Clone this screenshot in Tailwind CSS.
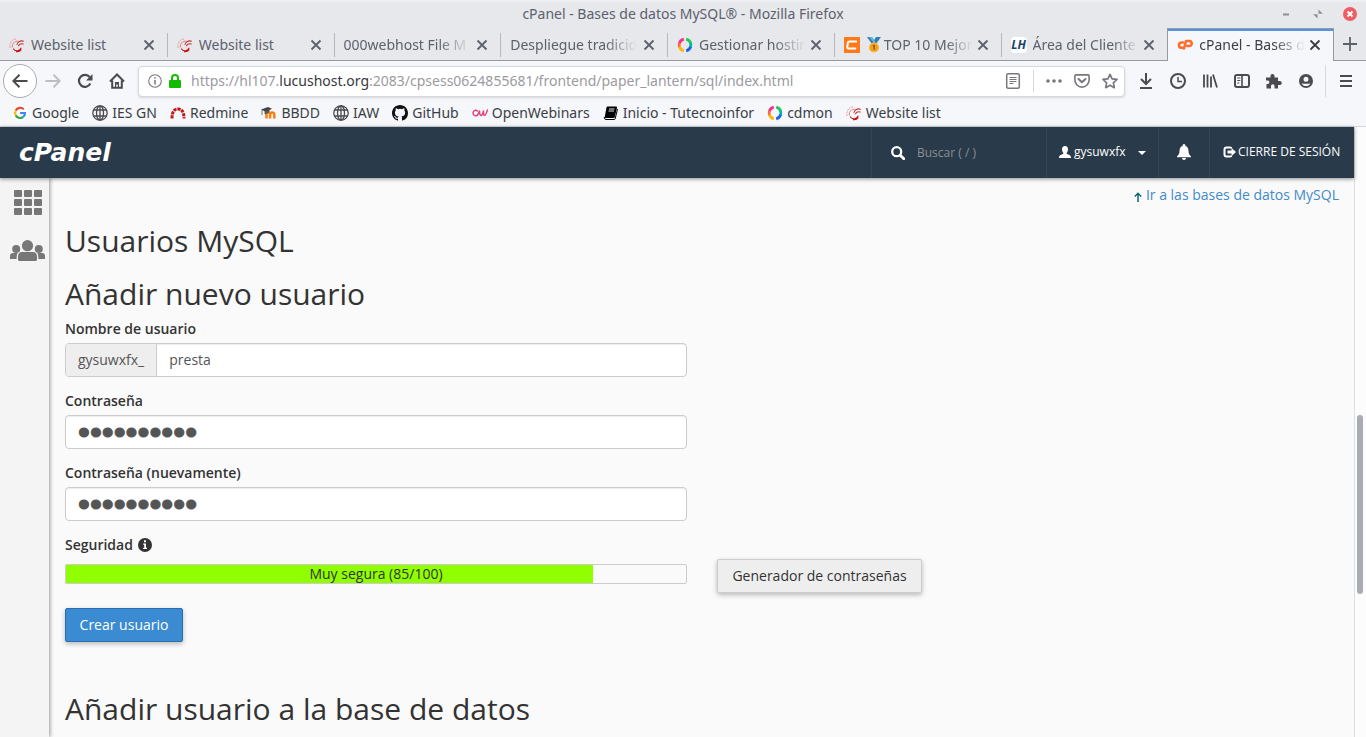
<!DOCTYPE html>
<html lang="es">
<head>
<meta charset="utf-8">
<title>cPanel - Bases de datos MySQL®</title>
<script src="https://cdn.jsdelivr.net/npm/@tailwindcss/browser@4"></script>
</head>
<body class="flex h-screen flex-col overflow-hidden bg-[#fafafa] font-['Open_Sans',sans-serif] text-sm text-[#333]">

<svg class="hidden" aria-hidden="true">
  <symbol id="swirl" viewBox="0 0 16 16"><g fill="none" stroke-linecap="round"><path d="M1 10.500C.2 6 3 2 8 1.800" stroke="#e39a9a" stroke-width="1" stroke-dasharray="1 1.600"/><path d="M3.300 10C3 6.500 5.500 4 9 4.200" stroke="#d86a6a" stroke-width=".9" stroke-dasharray="2 1"/><path d="M8 7.500C8.500 4.500 11.500 3.300 14.500 4.200M9.500 8.700c1-1.800 2.600-2.200 4.700-1.700" stroke="#c9302f" stroke-width="1.100"/><path d="M4.500 12c2 2.800 6 2.300 7.500-.8M7.500 14.700c2 .2 3.500-.4 4.500-1.700" stroke="#c81414" stroke-width="1.200"/></g></symbol>
  <symbol id="close" viewBox="0 0 12 12"><path d="M1.500 1.500l9 9M10.500 1.500l-9 9" fill="none" stroke="currentColor" stroke-width="1.800"/></symbol>
  <symbol id="globe" viewBox="0 0 16 16"><g fill="none" stroke="#4a4a4f" stroke-width="1.300"><circle cx="8" cy="8" r="7.200"/><ellipse cx="8" cy="8" rx="3.500" ry="7.200"/><path d="M8 .8v14.400M1.600 5h12.800M1.600 11h12.800"/></g></symbol>
  <symbol id="cdmon" viewBox="0 0 16 16"><g fill="none" stroke-width="2.800"><path d="M6.800 2.200A6 6 0 0 0 2.300 6.500" stroke="#f2338c"/><path d="M2.600 5.800A6 6 0 0 0 2.600 10.500" stroke="#fb6a4f"/><path d="M2.400 9.800A6 6 0 0 0 6.800 13.800" stroke="#ffb800"/><path d="M9.200 2.200A6 6 0 0 1 13.700 6.500" stroke="#22c55e"/><path d="M13.400 5.800A6 6 0 0 1 13.400 10.500" stroke="#00b8a0"/><path d="M13.600 9.800A6 6 0 0 1 9.200 13.800" stroke="#1b62f0"/></g></symbol>
</svg>

<!-- Window title -->
<header class="relative flex h-7 shrink-0 items-center justify-center border-t-2 border-[#eff0f3] bg-[#e7e8ec] pb-0.5 font-['Noto_Sans',sans-serif] text-sm text-[#5c616c]">
  <span>cPanel - Bases de datos MySQL® - Mozilla Firefox</span>
  <div class="absolute top-0 right-0 flex h-6 items-center gap-[18px] pr-[9px]">
    <button aria-label="Minimizar" class="size-3.5"><svg viewBox="0 0 14 14"><path d="M4 7.500h6" stroke="#8b8f98" stroke-width="2"/></svg></button>
    <button aria-label="Restaurar" class="size-3.5"><svg viewBox="0 0 14 14" fill="#8b8f98"><path d="M7.500 2.500v4.300h4.300zM6.500 11.500V7.200H2.200z"/></svg></button>
    <button aria-label="Cerrar" class="size-3.5"><svg viewBox="0 0 14 14"><circle cx="7" cy="7" r="7" fill="#f25c63"/><path d="M4.500 4.500l5 5M9.500 4.500l-5 5" stroke="#fff" stroke-width="2"/></svg></button>
  </div>
</header>

<!-- Tabs -->
<nav class="flex h-[33px] shrink-0 bg-[#e7e8ec] font-['Noto_Sans',sans-serif] text-sm text-[#5c616c]">
  <div class="grid min-w-0 flex-1 grid-cols-8">
    <div class="flex min-w-0 items-center border-b border-[#96999f] pt-px pr-3 pl-[9px]"><svg class="mr-1.5 size-4 shrink-0"><use href="#swirl"/></svg><span class="min-w-0 flex-1 overflow-hidden whitespace-nowrap">Website list</span><button aria-label="Cerrar pestaña" class="ml-1"><svg class="size-3"><use href="#close"/></svg></button></div>
    <div class="flex min-w-0 items-center border-b border-[#96999f] pt-px pr-3"><i class="mr-[9px] h-6 w-px bg-[#b4b7bd]"></i><svg class="mr-1.5 size-4 shrink-0"><use href="#swirl"/></svg><span class="min-w-0 flex-1 overflow-hidden whitespace-nowrap">Website list</span><button aria-label="Cerrar pestaña" class="ml-1"><svg class="size-3"><use href="#close"/></svg></button></div>
    <div class="flex min-w-0 items-center border-b border-[#96999f] pt-px pr-3"><i class="mr-[9px] h-6 w-px bg-[#b4b7bd]"></i><span class="min-w-0 flex-1 overflow-hidden whitespace-nowrap [mask-image:linear-gradient(to_right,black_75%,transparent)]">000webhost File M</span><button aria-label="Cerrar pestaña" class="ml-1.5"><svg class="size-3"><use href="#close"/></svg></button></div>
    <div class="flex min-w-0 items-center border-b border-[#96999f] pt-px pr-3"><i class="mr-[9px] h-6 w-px bg-[#b4b7bd]"></i><span class="min-w-0 flex-1 overflow-hidden whitespace-nowrap [mask-image:linear-gradient(to_right,black_75%,transparent)]">Despliegue tradicio</span><button aria-label="Cerrar pestaña" class="ml-1.5"><svg class="size-3"><use href="#close"/></svg></button></div>
    <div class="flex min-w-0 items-center border-b border-[#96999f] pt-px pr-3"><i class="mr-[9px] h-6 w-px bg-[#b4b7bd]"></i><svg class="mr-1.5 size-4 shrink-0"><use href="#cdmon"/></svg><span class="min-w-0 flex-1 overflow-hidden whitespace-nowrap [mask-image:linear-gradient(to_right,black_70%,transparent)]">Gestionar hostin</span><button aria-label="Cerrar pestaña" class="ml-1"><svg class="size-3"><use href="#close"/></svg></button></div>
    <div class="flex min-w-0 items-center border-b border-[#96999f] pt-px pr-3"><i class="mr-[9px] h-6 w-px bg-[#b4b7bd]"></i><svg class="mr-1.5 size-4 shrink-0" viewBox="0 0 16 16"><path fill="#ff7a1a" d="M0 0h16v16H0z"/><path d="M13 4.500H5.500Q4 4.500 3.800 6l-.5 4q-.2 1.500 1.300 1.500h7.600" fill="none" stroke="#fff" stroke-width="2"/></svg>
      <svg class="mr-0.5 size-4 shrink-0" viewBox="0 0 16 16"><path fill="#2f7fb5" d="M1 0h5l3 5-3 2zM15 0h-5L7 5l3 2z"/><path fill="#5fb4e0" d="M3 0h3l3 5-1 1z"/><circle cx="8" cy="10.500" r="5" fill="#fbb63a"/><circle cx="8" cy="10.500" r="3.800" fill="#f59e1b"/><path d="M6.900 9.300l1.300-.8v4.300" fill="none" stroke="#7b5212" stroke-width="1.200"/></svg>
      <span class="min-w-0 flex-1 overflow-hidden whitespace-nowrap [mask-image:linear-gradient(to_right,black_70%,transparent)]">TOP 10 Mejor</span><button aria-label="Cerrar pestaña" class="ml-1"><svg class="size-3"><use href="#close"/></svg></button></div>
    <div class="flex min-w-0 items-center border-b border-[#96999f] pt-px pr-3"><i class="mr-[9px] h-6 w-px bg-[#b4b7bd]"></i><span class="mr-1.5 flex size-4 shrink-0 items-center justify-center rounded-sm bg-white font-['Open_Sans',sans-serif] text-xs font-bold text-[#17456b] italic">LH</span><span class="min-w-0 flex-1 overflow-hidden whitespace-nowrap [mask-image:linear-gradient(to_right,black_75%,transparent)]">Área del Cliente</span><button aria-label="Cerrar pestaña" class="ml-1"><svg class="size-3"><use href="#close"/></svg></button></div>
    <div class="flex min-w-0 items-center border-x border-t border-[#96999f] bg-[#f5f7fa] pr-3 pl-[9px] text-[#3b3e45] shadow-[inset_0_2px_0_#5294e2]"><svg class="mr-1.5 size-4 shrink-0" viewBox="0 0 16 16"><g fill="none" stroke="#ff6c2c" stroke-width="2.600" stroke-linecap="round" stroke-linejoin="round"><path d="M6 5.500H4.200a2.700 2.700 0 0 0 0 5.300h1.300"/><path d="M7 11.500L9 4h3.200a2.400 2.400 0 0 1 0 5h-2"/></g></svg><span class="min-w-0 flex-1 overflow-hidden whitespace-nowrap [mask-image:linear-gradient(to_right,black_70%,transparent)]">cPanel - Bases d</span><button aria-label="Cerrar pestaña" class="ml-1"><svg class="size-3"><use href="#close"/></svg></button></div>
  </div>
  <button aria-label="Nueva pestaña" class="flex w-8 items-center justify-center border-b border-[#96999f]"><svg class="size-3.5" viewBox="0 0 14 14"><path d="M7 0v14M0 7h14" stroke="#5c616c" stroke-width="1.800"/></svg></button>
</nav>

<!-- Navigation toolbar -->
<div class="flex h-10 shrink-0 items-center bg-[#f5f7fa] pl-[3px] text-[#4a4a4f]">
  <button aria-label="Atrás" class="flex size-[34px] items-center justify-center rounded-full border border-[#a9abb0] bg-white"><svg class="size-4" viewBox="0 0 16 16"><path d="M15.500 8H1.500M7.500 1.800L1.300 8l6.200 6.200" fill="none" stroke="currentColor" stroke-width="2"/></svg></button>
  <button aria-label="Adelante" class="flex w-8 justify-center text-[#bcbec2]"><svg class="size-4" viewBox="0 0 16 16"><path d="M.5 8h14M8.500 1.800L14.700 8l-6.200 6.200" fill="none" stroke="currentColor" stroke-width="2"/></svg></button>
  <button aria-label="Recargar" class="flex w-8 justify-center"><svg class="size-4" viewBox="0 0 16 16"><path d="M13.300 10.600A6 6 0 1 1 12.700 4.200" fill="none" stroke="currentColor" stroke-width="2.200"/><path fill="currentColor" d="M15.500 1v6.500H9z"/></svg></button>
  <button aria-label="Inicio" class="flex w-8 justify-center"><svg class="size-4" viewBox="0 0 16 16"><path d="M1 8.500L8 1.500l7 7M3.200 7.500v7.300h9.600V7.500" fill="none" stroke="currentColor" stroke-width="2"/><path fill="currentColor" d="M6 9h4v5.500H8.800v-3H7.200v3H6z"/></svg></button>
  <div class="ml-[5px] flex h-[31px] min-w-0 flex-1 items-center rounded border border-[#d5d8de] bg-white pl-2 font-['Noto_Sans',sans-serif] text-sm text-[#9b9ba0] shadow-sm">
    <svg class="size-4" viewBox="0 0 16 16"><circle cx="8" cy="8" r="6.300" fill="none" stroke="#77777c" stroke-width="1.100"/><path d="M8 7v4.500M8 4.300v1.500" stroke="#77777c" stroke-width="1.500"/></svg>
    <svg class="ml-1 size-4" viewBox="0 0 16 16"><rect x="2" y="7" width="12" height="8" rx="1" fill="#12bc00"/><path d="M5 8V5a3 3 0 0 1 6 0v3" fill="none" stroke="#12bc00" stroke-width="2"/></svg>
    <div role="textbox" aria-label="Dirección" class="ml-2 min-w-0 flex-1 truncate">https://hl107.<span class="text-[#38383d]">lucushost.org</span>:2083/cpsess0624855681/frontend/paper_lantern/sql/index.html</div>
    <button aria-label="Modo de lectura" class="flex w-7 justify-center"><svg class="size-4" viewBox="0 0 16 16" fill="none" stroke="#77777c"><rect x="1.700" y=".8" width="12.600" height="14.400" rx="1.500" stroke-width="1.500"/><path d="M4.500 4.500h7M4.500 6.500h7M4.500 8.500h7M4.500 10.500h4"/></svg></button>
    <i class="ml-1.5 h-[22px] w-px bg-[#d5d8de]"></i>
    <button aria-label="Acciones" class="ml-1.5 flex w-7 justify-center"><svg class="size-4" viewBox="0 0 16 16" fill="#77777c"><circle cx="2" cy="8" r="1.800"/><circle cx="8" cy="8" r="1.800"/><circle cx="14" cy="8" r="1.800"/></svg></button>
    <button aria-label="Pocket" class="flex w-7 justify-center"><svg class="size-4" viewBox="0 0 16 16" fill="none" stroke="#77777c"><path d="M1.900 1.900h12.200q1 0 1 1V7a7.100 7.100 0 0 1-14.200 0V2.900q0-1 1-1z" stroke-width="1.600"/><path d="M4.500 6L8 9.300 11.500 6" stroke-width="2" stroke-linecap="round" stroke-linejoin="round"/></svg></button>
    <button aria-label="Marcador" class="flex w-7 justify-center"><svg class="size-4" viewBox="0 0 16 16"><path d="M8 1.300l2.100 4.500 4.900.6-3.600 3.400.9 4.900L8 12.300l-4.300 2.400.9-4.900L1 6.400l4.900-.6z" fill="none" stroke="#77777c" stroke-width="1.700" stroke-linejoin="round"/></svg></button>
  </div>
  <div class="ml-[5px] flex">
    <button aria-label="Descargas" class="flex w-8 justify-center"><svg class="size-4" viewBox="0 0 16 16" fill="none" stroke="currentColor" stroke-width="2"><path d="M8 0v11M3 6l5 5 5-5M2 15h12"/></svg></button>
    <button aria-label="Historial" class="flex w-8 justify-center"><svg class="size-4" viewBox="0 0 16 16" fill="none" stroke="currentColor"><circle cx="8" cy="8" r="7" stroke-width="2"/><path d="M8 4v4.500h4" stroke-width="1.500"/></svg></button>
    <button aria-label="Biblioteca" class="flex w-8 justify-center"><svg class="size-4" viewBox="0 0 16 16" fill="none" stroke="currentColor"><path d="M2 1.500v13M5.500 1.500v13M9 3.500v11M11 1.500l4 13" stroke-width="1.800"/></svg></button>
    <button aria-label="Barra lateral" class="flex w-8 justify-center"><svg class="size-4" viewBox="0 0 16 16" fill="none" stroke="currentColor"><rect x="1" y="2" width="14" height="12" rx="2" stroke-width="2"/><path d="M8 2v12" stroke-width="1.600"/><path d="M3.300 5h3M3.300 7.500h3M3.300 10h2"/></svg></button>
    <button aria-label="Complementos" class="flex w-8 justify-center"><svg class="size-4" viewBox="0 0 16 16" fill="currentColor"><path d="M0 4.500h4.500V3a2 2 0 0 1 4 0v1.500H12V8h1.800a2 2 0 0 1 0 4H12v3.500H8.500V13a1.700 1.700 0 0 0-3.500 0v2.500H.5V11H2a1.800 1.800 0 0 0 0-3.500H0z"/></svg></button>
    <button aria-label="Cuenta" class="flex w-8 justify-center"><svg class="size-4" viewBox="0 0 16 16"><circle cx="8" cy="8" r="7" fill="currentColor"/><path fill="#f5f7fa" d="M8 3.700a2.500 2.500 0 0 1 0 5 2.500 2.500 0 0 1 0-5zM3.500 10.500q2 .3 4.500.3t4.500-.3A5.200 5.200 0 0 1 3.500 10.500z"/></svg></button>
  </div>
  <i class="ml-[3px] h-8 w-px bg-[#d5d8de]"></i>
  <button aria-label="Menú" class="mx-1 flex w-8 justify-center"><svg class="size-4" viewBox="0 0 16 16"><path d="M2 3h12M2 8h12M2 13h12" stroke="currentColor" stroke-width="1.800"/></svg></button>
</div>

<!-- Bookmarks -->
<nav class="flex h-[26px] shrink-0 items-center gap-[13px] border-b border-[#d5d9df] bg-[#f5f7fa] pb-0.5 pl-3 font-['Noto_Sans',sans-serif] text-sm whitespace-nowrap text-[#3b3e45]">
  <a href="#" class="flex items-center gap-1"><svg class="size-4" viewBox="0 0 16 16"><circle cx="8" cy="8" r="8" fill="#fff"/><g fill="none" stroke-width="2.200"><path d="M11.800 4.300A5 5 0 0 0 3.700 5.600" stroke="#ea4335"/><path d="M3.700 5.600a5 5 0 0 0 0 4.800" stroke="#fbbc05"/><path d="M3.700 10.400a5 5 0 0 0 7.400 1.600" stroke="#34a853"/><path d="M11.100 12A5 5 0 0 0 13 8H8" stroke="#4285f4"/></g></svg>Google</a>
  <a href="#" class="flex items-center gap-1"><svg class="size-4"><use href="#globe"/></svg>IES GN</a>
  <a href="#" class="flex items-center gap-1"><svg class="size-4" viewBox="0 0 16 16"><path d="M2 13.500Q2 4 8 4t6 9.500" fill="none" stroke="#c4161c" stroke-width="3" stroke-dasharray="3.200 .8"/></svg>Redmine</a>
  <a href="#" class="flex items-center gap-1"><svg class="size-4" viewBox="0 0 16 16"><path d="M5.500 13.500V9.500q0-2 1.800-2t1.800 2v4m0-4q0-2 2-2t2.200 2v4" fill="none" stroke="#f98012" stroke-width="2.500"/><path d="M0 4.500L7 2l4 1.800L5 7z" fill="#444"/><path d="M1 5v5M4 6v3l4-2V5" stroke="#555" fill="#555" stroke-width=".8"/></svg>BBDD</a>
  <a href="#" class="flex items-center gap-1"><svg class="size-4"><use href="#globe"/></svg>IAW</a>
  <a href="#" class="flex items-center gap-1"><svg class="size-4" viewBox="0 0 16 16"><path fill="#111" d="M8 0C3.580 0 0 3.580 0 8c0 3.540 2.290 6.530 5.470 7.590.4.070.55-.17.55-.38v-1.490c-2.010.37-2.530-.49-2.690-.94-.09-.23-.48-.94-.82-1.130-.28-.15-.68-.52-.01-.53.63-.01 1.080.58 1.230.82.72 1.210 1.870.87 2.330.66.07-.52.28-.87.51-1.070-1.780-.2-3.640-.89-3.640-3.950 0-.87.31-1.590.82-2.150-.08-.2-.36-1.020.08-2.120 0 0 .67-.21 2.200.82a7.600 7.600 0 0 1 4 0c1.530-1.040 2.200-.82 2.200-.82.44 1.100.16 1.920.08 2.120.51.56.82 1.270.82 2.150 0 3.070-1.870 3.750-3.650 3.950.29.25.54.73.54 1.480v2.200c0 .21.15.46.55.38A8 8 0 0 0 16 8c0-4.420-3.580-8-8-8z"/></svg>GitHub</a>
  <a href="#" class="flex items-center gap-1"><svg class="size-4" viewBox="0 0 16 16"><path d="M5.500 6A2.700 2.700 0 1 0 6 9.500L7.500 6q.2 4.500 1.500 4.500T11.500 6q-.2 4.500 1 4.500T15.500 5" fill="none" stroke="#e8407c" stroke-width="1.500" stroke-linecap="round" stroke-linejoin="round"/></svg>OpenWebinars</a>
  <a href="#" class="flex items-center gap-1"><svg class="size-4" viewBox="0 0 16 16"><path d="M4.500 1.500H13q1.300 0 1 1.200L11.800 12q-.2 1-1.500 1H2.800q-1.300 0-1-1.200L3.500 2.500q.2-1 1-1z" fill="#000"/><path d="M1.300 12q-.2 2.500 1.700 2.500h8q1 0 1.200-.8L14.500 4" fill="none" stroke="#000"/><path d="M6 4h5.500M5.500 6H11" stroke="#fff" stroke-width=".9"/></svg>Inicio - Tutecnoinfor</a>
  <a href="#" class="flex items-center gap-1"><svg class="size-4"><use href="#cdmon"/></svg>cdmon</a>
  <a href="#" class="flex items-center gap-1"><svg class="size-4"><use href="#swirl"/></svg>Website list</a>
</nav>

<div class="flex min-h-0 flex-1">
  <div class="flex min-w-0 flex-1 flex-col">
    <!-- cPanel header -->
    <header class="z-10 flex h-[51px] shrink-0 items-stretch bg-[#293a4a] text-xs text-white shadow-[0_1px_4px_rgba(0,0,0,0.45)]">
      <a href="#" class="flex flex-1 items-center pl-[19px] font-['DejaVu_Sans',sans-serif] text-[25px] leading-none font-bold italic">cPanel</a>
      <label class="flex w-[175px] items-center border-l border-[#334657] pl-[19px]">
        <svg class="size-3.5" viewBox="0 0 14 14" fill="none" stroke="#fff"><circle cx="5.700" cy="5.700" r="4.500" stroke-width="2.300"/><path d="M9.200 9.200l3.600 3.600" stroke-width="2.800" stroke-linecap="round"/></svg>
        <input type="text" aria-label="Buscar" placeholder="Buscar ( / )" class="ml-3 w-[110px] bg-transparent outline-none placeholder:text-[#8a8f94]">
      </label>
      <button class="flex w-28 items-center border-l border-[#334657] pb-0.5 pl-3">
        <svg class="mr-[3px] size-3" viewBox="0 0 12 12" fill="#fff"><path d="M6 0c2 0 3 1.300 3 3.200 0 1.600-.6 2.800-1.300 3.500v1.100C9.500 8.800 12 9.300 12 11.200v.8H0v-.8c0-1.900 2.500-2.400 4.300-3.400V6.700C3.600 6 3 4.800 3 3.200 3 1.300 4 0 6 0z"/></svg>
        gysuwxfx
        <svg class="mt-0.5 ml-3 h-1 w-2" viewBox="0 0 8 4"><path d="M0 0h8L4 4z" fill="#fff"/></svg>
      </button>
      <button aria-label="Notificaciones" class="flex w-[51px] items-center justify-center border-l border-[#334657] pb-0.5"><svg class="size-4" viewBox="0 0 16 16" fill="#fff"><path d="M8 0a1.300 1.300 0 0 1 1.200 1.800C11.500 2.500 12.500 4.500 12.500 7c0 2.500 1 4 2.500 5.500v.8H1v-.8C2.500 11 3.500 9.500 3.500 7c0-2.500 1-4.500 3.300-5.200A1.300 1.300 0 0 1 8 0zM6 14h4a2 2 0 0 1-4 0z"/></svg></button>
      <a href="#" class="flex w-[145px] items-center border-l border-[#334657] pb-0.5 pl-[13px] whitespace-nowrap"><svg class="mr-0.5 h-3 w-[13px]" viewBox="0 0 13 12"><path d="M7 1.500H3.500q-2 0-2 2v5q0 2 2 2H7q1.300 0 1.500-1M7 1.500q1.300 0 1.500 1" fill="none" stroke="#fff" stroke-width="2"/><path d="M4.500 4.500H8.500V2L13 6l-4.500 4V7.500h-4z" fill="#fff"/></svg>CIERRE DE SESIÓN</a>
    </header>

    <div class="flex min-h-0 flex-1">
      <aside class="z-[1] flex w-[49px] shrink-0 flex-col bg-[#f4f4f4] text-[#777] shadow-[1px_0_4px_rgba(0,0,0,0.4)]">
        <a href="#" aria-label="Inicio" class="mt-3 ml-3.5"><svg class="h-[25px] w-7" viewBox="0 0 28 25" fill="currentColor"><rect width="8" height="7" rx="1"/><rect x="10" width="8" height="7" rx="1"/><rect x="20" width="8" height="7" rx="1"/><rect y="9" width="8" height="7" rx="1"/><rect x="10" y="9" width="8" height="7" rx="1"/><rect x="20" y="9" width="8" height="7" rx="1"/><rect y="18" width="8" height="7" rx="1"/><rect x="10" y="18" width="8" height="7" rx="1"/><rect x="20" y="18" width="8" height="7" rx="1"/></svg></a>
        <a href="#" aria-label="Administrador de usuarios" class="mt-[25px] ml-2.5"><svg class="h-[21px] w-[35px]" viewBox="0 0 35 21" fill="currentColor"><circle cx="6.200" cy="9" r="4"/><circle cx="28.800" cy="9" r="4"/><path d="M0 19v-3q0-3 3-3h4.500q-1 2.500-.8 6zM35 19v-3q0-3-3-3h-4.500q1 2.500.8 6z"/><circle cx="17.500" cy="5.700" r="5.600"/><path d="M9.500 21q-1.500 0-1.500-1.500V17q0-5 4-5h11q4 0 4 5v2.500q0 1.500-1.500 1.500z"/></svg></a>
      </aside>

      <main class="min-w-0 flex-1 overflow-hidden pl-px">
        <div class="flex justify-end px-[15px] pt-[7px]"><a href="#" class="flex items-center gap-1 leading-5 text-[#428bca]"><svg class="mt-1 h-2.5 w-2" viewBox="0 0 8 10"><path d="M4 10V1M.8 4.500L4 1.300l3.200 3.200" fill="none" stroke="#0b6b70" stroke-width="1.500"/></svg>Ir a las bases de datos MySQL</a></div>
        <h2 class="mt-[19px] px-[15px] text-[30px] leading-[33px]">Usuarios MySQL</h2>
        <h2 class="mt-5 px-[15px] text-[30px] leading-[33px]">Añadir nuevo usuario</h2>
        <form>
          <div class="mt-[9px] w-1/2 px-[15px]">
            <label for="user" class="mb-1 block leading-5 font-semibold">Nombre de usuario</label>
            <div class="flex h-[34px] overflow-hidden rounded border border-[#ccc] bg-white text-[#555]">
              <span class="flex items-center border-r border-[#ccc] bg-[#eee] px-3">gysuwxfx_</span>
              <input id="user" type="text" value="presta" class="min-w-0 flex-1 px-3 shadow-[inset_0_1px_1px_rgba(0,0,0,0.075)] outline-none">
            </div>
            <label for="pass1" class="mt-3.5 mb-1 block leading-5 font-semibold">Contraseña</label>
            <input id="pass1" type="password" value="abcdefghij" class="block h-[34px] w-full rounded border border-[#ccc] bg-white px-3 pt-px font-['Liberation_Sans',sans-serif] text-[34px] leading-8 text-[#555] shadow-[inset_0_1px_1px_rgba(0,0,0,0.075)] outline-none [-webkit-text-stroke:1px_#555]">
            <label for="pass2" class="mt-3.5 mb-1 block leading-5 font-semibold">Contraseña (nuevamente)</label>
            <input id="pass2" type="password" value="abcdefghij" class="block h-[34px] w-full rounded border border-[#ccc] bg-white px-3 pt-px font-['Liberation_Sans',sans-serif] text-[34px] leading-8 text-[#555] shadow-[inset_0_1px_1px_rgba(0,0,0,0.075)] outline-none [-webkit-text-stroke:1px_#555]">
            <div class="mt-3.5 flex items-center gap-[5px] leading-5 font-semibold">Seguridad <svg class="size-3.5" viewBox="0 0 14 14"><circle cx="7" cy="7" r="7" fill="#333"/><path d="M6 2.300h2v2H6zM5.200 5.500H8v4.300h1v1.300H5.200V9.800h1V6.800h-1z" fill="#fff"/></svg></div>
          </div>
          <div class="mt-1 flex items-center">
            <div class="w-1/2 px-[15px]">
              <div role="progressbar" aria-valuenow="85" aria-valuemin="0" aria-valuemax="100" aria-label="Seguridad" class="relative mb-1 h-5 rounded-xs border border-[#ccc] text-center leading-[18px]">
                <div class="absolute inset-y-0 left-0 bg-[#90ff00]" style="width:85%"></div>
                <span class="relative">Muy segura (85/100)</span>
              </div>
            </div>
            <div class="px-[15px]"><button type="button" class="h-[34px] min-w-[205px] rounded-xs border border-[#ccc] bg-[#eee] px-3 shadow-[0_2px_5px_rgba(0,0,0,0.26)]">Generador de contraseñas</button></div>
          </div>
          <div class="mt-[15px] px-[15px]"><button type="button" class="h-[34px] min-w-[118px] rounded-xs border border-[#2a6db0] bg-[#3a8bd1] px-3 text-white shadow-[0_2px_5px_rgba(0,0,0,0.26)]">Crear usuario</button></div>
        </form>
        <h2 class="mt-[50px] px-[15px] text-[30px] leading-[33px]">Añadir usuario a la base de datos</h2>
      </main>
    </div>
  </div>
  <!-- Scroll track -->
  <div class="flex w-3 shrink-0 flex-col border-l border-[#dcdfe3] bg-[#fcfcfc] pl-0.5">
    <div class="flex-[288]"></div>
    <div class="w-1.5 flex-[179] rounded-full bg-[#a9acb2]"></div>
    <div class="flex-[143]"></div>
  </div>
</div>
</body>
</html>
